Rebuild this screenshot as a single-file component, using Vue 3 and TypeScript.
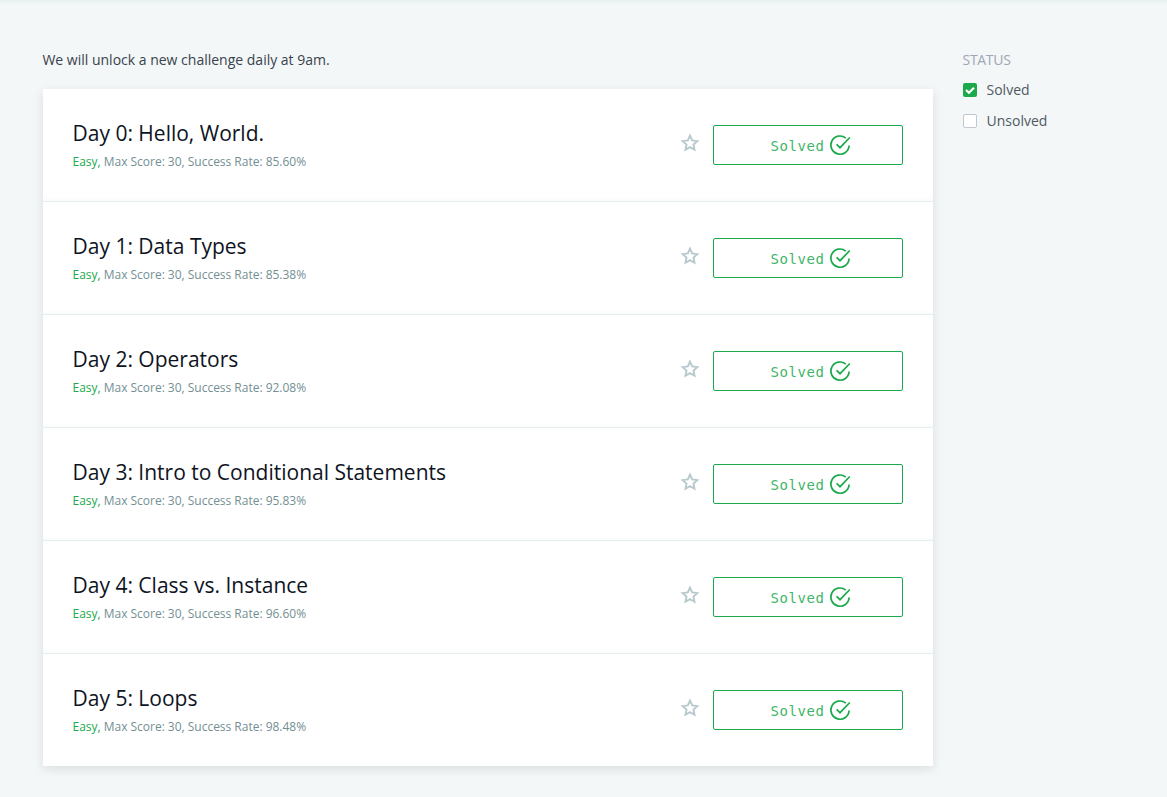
<script setup lang="ts">
interface Challenge {
  title: string
  rate: string
}

const challenges: Challenge[] = [
  { title: 'Day 0: Hello, World.', rate: '85.60%' },
  { title: 'Day 1: Data Types', rate: '85.38%' },
  { title: 'Day 2: Operators', rate: '92.08%' },
  { title: 'Day 3: Intro to Conditional Statements', rate: '95.83%' },
  { title: 'Day 4: Class vs. Instance', rate: '96.60%' },
  { title: 'Day 5: Loops', rate: '98.48%' },
]
</script>

<template>
  <div class="page">
    <main class="main">
      <p class="intro">We will unlock a new challenge daily at 9am.</p>
      <div class="list">
        <article v-for="c in challenges" :key="c.title" class="row">
          <div class="info">
            <h4 class="title">{{ c.title }}</h4>
            <div class="meta"><span class="easy">Easy,</span> Max Score: 30, Success Rate: {{ c.rate }}</div>
          </div>
          <svg class="star" viewBox="0 0 24 24" width="20" height="20">
            <path d="M12 3.200l2.600 5.700 6.200.8-4.600 4.200 1.200 6.200L12 17l-5.400 3.100 1.200-6.200-4.600-4.200 6.200-.8z" />
          </svg>
          <button class="btn" type="button">
            <span class="btn-label">Solved</span>
            <svg class="check" viewBox="0 0 24 24" width="24" height="24">
              <path d="M17.800 5.100A9.100 9.100 0 1 0 21.100 12.500" />
              <path d="M8.600 11.300l3.400 3.400L21.800 4.500" />
            </svg>
          </button>
        </article>
      </div>
    </main>
    <aside class="filters">
      <div class="heading">STATUS</div>
      <div class="option">
        <span class="box checked">
          <svg viewBox="0 0 14 14" width="14" height="14"><path d="M3 7l2.900 2.700L11 4.700" /></svg>
        </span>
        <span>Solved</span>
      </div>
      <div class="option">
        <span class="box"></span>
        <span>Unsolved</span>
      </div>
    </aside>
  </div>
</template>

<style>
body {
  margin: 0;
  background: #f3f7f7;
}
</style>

<style scoped>
.page {
  box-sizing: border-box;
  display: flex;
  height: 797px;
  padding: 49px 0 0 43px;
  overflow: hidden;
  background: linear-gradient(#e9f0f0, #f3f7f7 5px);
  font-family: "Open Sans", sans-serif;
}
.main {
  width: 890px;
}
.intro {
  margin: 0 0 18px;
  font-size: 14px;
  line-height: 22px;
  color: #39424e;
  text-indent: -0.6px;
}
.list {
  background: #fff;
  box-shadow: 0 3px 10px rgba(0, 0, 0, 0.1);
}
.row {
  box-sizing: border-box;
  display: flex;
  height: 113px;
  padding: 0 30px;
  border-bottom: 1px solid #e7eeef;
  background: linear-gradient(to top, #fafbfb, #fff 5px);
}
.row:last-child {
  height: 112px;
  border-bottom: 0;
  background: #fff;
}
.info {
  flex: 1;
  padding-top: 30px;
}
.title {
  margin: 0;
  font-size: 21px;
  font-weight: 400;
  line-height: 29px;
  color: #0e141e;
  text-indent: -0.5px;
}
.meta {
  margin-top: 4px;
  font-size: 12px;
  line-height: 20px;
  color: #738f93;
  letter-spacing: -0.015px;
  text-indent: -0.5px;
}
.easy {
  color: #1ba94c;
}
.star {
  margin: 44px 13px 0 0;
  fill: none;
  stroke: #b7c9cc;
  stroke-width: 2.300;
}
.btn {
  box-sizing: border-box;
  display: flex;
  align-items: center;
  justify-content: center;
  width: 190px;
  height: 40px;
  margin-top: 36px;
  padding: 0;
  border: 1px solid #1ba94c;
  border-radius: 2px;
  background: #fff;
  color: #1ba94c;
}
.btn-label {
  margin: 2px 3px 0 6px;
  font: 14px/20px "DejaVu Sans Mono", monospace;
  letter-spacing: 0.6px;
  color: #3fb568;
}
.check {
  fill: none;
  stroke: #1ba94c;
  stroke-width: 1.700;
}
.filters {
  padding-left: 30px;
  font-size: 14px;
  line-height: 22px;
}
.heading {
  margin-bottom: 8px;
  color: #a0a6b5;
  letter-spacing: -0.3px;
  text-indent: -0.5px;
}
.option {
  display: flex;
  align-items: center;
  height: 22px;
  margin-bottom: 9px;
  color: #4f5965;
}
.box {
  box-sizing: border-box;
  width: 14px;
  height: 14px;
  margin-right: 9.5px;
  border: 1px solid #c2c7d0;
  border-radius: 2px;
  background: #fff;
}
.checked {
  border: 0;
  background: #1ba94c;
}
.box svg {
  display: block;
  fill: none;
  stroke: #fff;
  stroke-width: 2.200;
}
</style>
